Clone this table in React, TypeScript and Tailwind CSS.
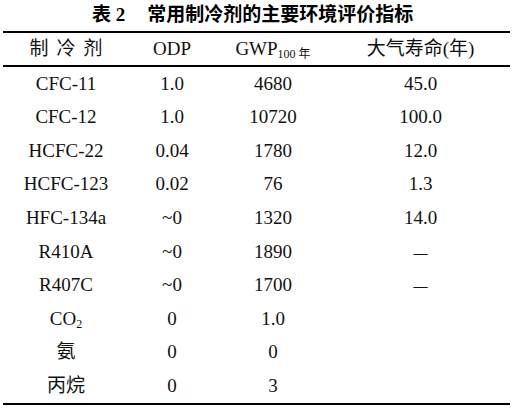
import React from "react";

interface Row {
  name: React.ReactNode;
  odp: string;
  gwp: string;
  life: React.ReactNode;
}

const dash = <span className="text-[14px] font-bold">—</span>;

const rows: Row[] = [
  { name: "CFC-11", odp: "1.0", gwp: "4680", life: "45.0" },
  { name: "CFC-12", odp: "1.0", gwp: "10720", life: "100.0" },
  { name: "HCFC-22", odp: "0.04", gwp: "1780", life: "12.0" },
  { name: "HCFC-123", odp: "0.02", gwp: "76", life: "1.3" },
  { name: "HFC-134a", odp: "~0", gwp: "1320", life: "14.0" },
  { name: "R410A", odp: "~0", gwp: "1890", life: dash },
  { name: "R407C", odp: "~0", gwp: "1700", life: dash },
  {
    name: (
      <>
        CO<sub className="text-[12px] relative top-[3px] align-baseline">2</sub>
      </>
    ),
    odp: "0",
    gwp: "1.0",
    life: "",
  },
  { name: "氨", odp: "0", gwp: "0", life: "" },
  { name: "丙烷", odp: "0", gwp: "3", life: "" },
];

const cols = "grid grid-cols-[126px_86px_116px_179px]";

const App = () => {
  return (
    <div
      className="w-[517px] h-[412px] bg-white text-[#111] overflow-hidden"
      style={{ fontFamily: '"Liberation Serif", "Noto Sans CJK SC", serif' }}
    >
      <div className="h-[31px] flex items-center pl-[92px] text-[19px] font-bold text-black">
        <span>表 2</span>
        <span className="ml-[22px]">常用制冷剂的主要环境评价指标</span>
      </div>
      <div className="ml-[3px] w-[507px] border-t-2 border-b-2 border-black">
        <div className={`${cols} h-[34px] items-center text-[19px] border-b-2 border-black`}>
          <div className="text-center tracking-[8px] pl-[8px]">制冷剂</div>
          <div className="text-center">ODP</div>
          <div className="text-center">
            GWP<sub className="text-[12px] relative top-[3px] align-baseline">100 年</sub>
          </div>
          <div className="text-center">大气寿命(年)</div>
        </div>
        {rows.map((r, i) => (
          <div key={i} className={`${cols} h-[33.6px] items-center text-[19px]`}>
            <div className="text-center">{r.name}</div>
            <div className="text-center">{r.odp}</div>
            <div className="text-center">{r.gwp}</div>
            <div className="text-center">{r.life}</div>
          </div>
        ))}
      </div>
    </div>
  );
};

export default App;
